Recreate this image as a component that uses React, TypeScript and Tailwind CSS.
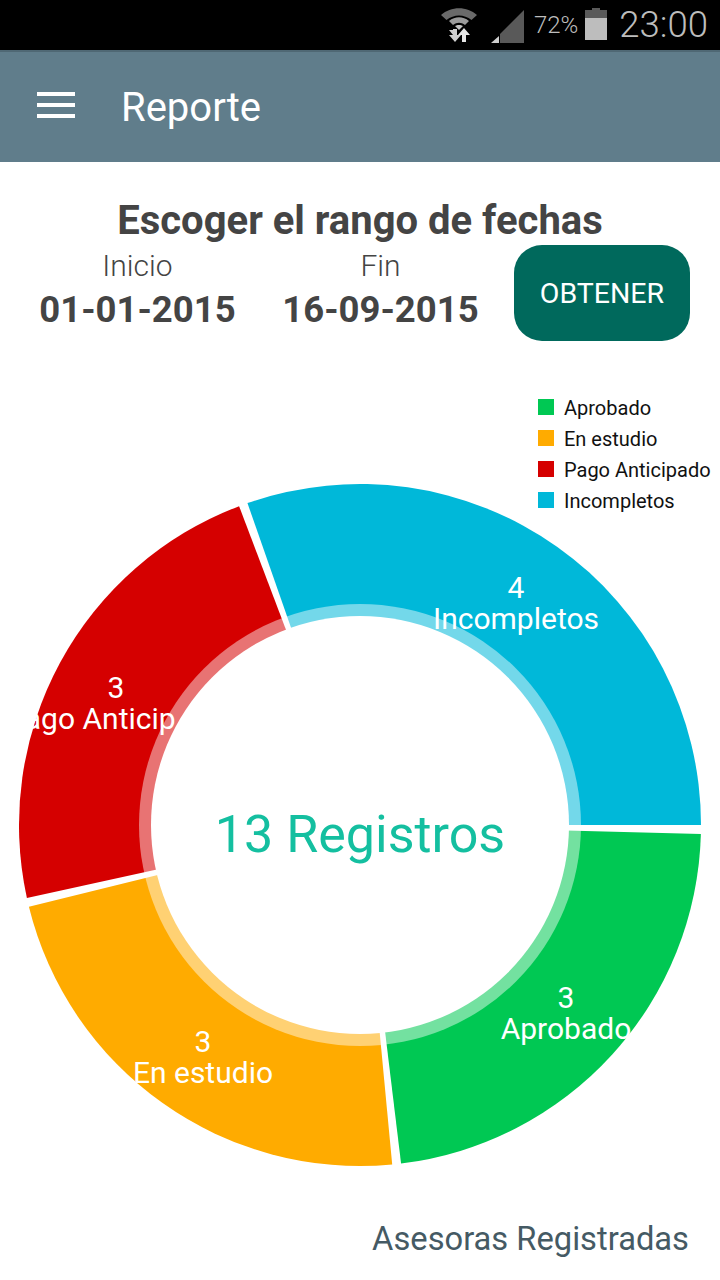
const CX = 360;
const CY = 465;
const R = 341;

const slices = [
  { from: 1.5, to: 83.08, color: "#00C853" },
  { from: 84.58, to: 166.15, color: "#FFAB00" },
  { from: 167.65, to: 249.23, color: "#D50000" },
  { from: 250.73, to: 360, color: "#00B8D9" },
];

function pt(r: number, deg: number) {
  const a = (deg * Math.PI) / 180;
  return `${(CX + r * Math.cos(a)).toFixed(2)} ${(CY + r * Math.sin(a)).toFixed(2)}`;
}

function wedge(from: number, to: number) {
  const large = to - from > 180 ? 1 : 0;
  return `M ${CX} ${CY} L ${pt(R, from)} A ${R} ${R} 0 ${large} 1 ${pt(R, to)} Z`;
}

const labels = [
  { x: 566, n: 648, t: 679, n1: "3", t1: "Aprobado" },
  { x: 203, n: 692, t: 723, n1: "3", t1: "En estudio" },
  { x: 116, n: 338, t: 369, n1: "3", t1: "Pago Anticipado", clip: "url(#pago)" },
  { x: 516, n: 238, t: 269, n1: "4", t1: "Incompletos" },
];

const legend = [
  { c: "bg-[#00C853]", t: "Aprobado" },
  { c: "bg-[#FFAB00]", t: "En estudio" },
  { c: "bg-[#D50000]", t: "Pago Anticipado" },
  { c: "bg-[#00B8D9]", t: "Incompletos" },
];

function Wifi() {
  return (
    <svg width="36" height="36" viewBox="0 0 36 36" className="mr-[14px] mt-[7px]">
      <path d="M0 8 C 10 -1, 26 -1, 36 8 L 30.5 13 C 23 7, 13 7, 5.500 13 Z" fill="#6a6a6a" />
      <path d="M8 14 C 14 9, 22 9, 28 14 L 24 18 C 20 15, 16 15, 12 18 Z" fill="#9a9a9a" />
      <path d="M14 19 C 16 17.5, 20 17.5, 22 19 L 18 23 Z" fill="#c4c4c4" />
      <path d="M10 24 h4 v-1 h4 v1 v5 h4 l-6 7 l-6 -7 h4 Z" transform="translate(-2 -1)" fill="#d0d0d0" />
      <path d="M20 21 l6 7 h-4 v7 h-4 v-7 h-4 Z" transform="translate(3 0)" fill="#e6e6e6" />
    </svg>
  );
}

function Signal() {
  return (
    <svg width="33" height="34" viewBox="0 0 33 34" className="mr-[10px] mt-[10px]">
      <path d="M33 0 V33 H9 V24 Z" fill="#595959" />
      <path d="M0 33 L8 26 V33 Z" fill="#cfcfcf" />
    </svg>
  );
}

function Battery() {
  return (
    <svg width="22" height="32" viewBox="0 0 22 32" className="ml-[7px] mr-[12px] mt-[-2px]">
      <path d="M7 0 h8 v2 h7 v9 H0 V2 h7 Z" fill="#5a5a5a" />
      <rect x="0" y="10" width="22" height="22" fill="#bdbdbd" />
    </svg>
  );
}

export default function App() {
  return (
    <div className="w-[720px] h-[1280px] overflow-hidden bg-white font-['Roboto',sans-serif]">
      <div className="h-[50px] bg-black flex items-start justify-end">
        <Wifi />
        <Signal />
        <span className="text-[24px] leading-[50px] text-[#bdbdbd] font-light">72%</span>
        <div className="h-[50px] flex items-center">
          <Battery />
        </div>
        <span className="text-[36.500px] leading-[50px] text-[#bdbdbd] font-light mr-[12px]">23:00</span>
      </div>

      <div className="h-[112px] bg-[#607D8B] border-t-2 border-[#4f6874] flex items-center">
        <div className="ml-[37px] mb-[4px] w-[38px] flex flex-col gap-[7px]">
          <div className="h-[4px] bg-white" />
          <div className="h-[4px] bg-white" />
          <div className="h-[4px] bg-white" />
        </div>
        <span className="ml-[46px] mt-[2px] text-[40px] leading-none text-white">Reporte</span>
      </div>

      <h1 className="mt-[35px] text-center text-[40px] leading-[48px] font-bold text-[#444444]">
        Escoger el rango de fechas
      </h1>

      <div className="flex items-start mt-[3px]">
        <div className="w-[243px] ml-[16px] text-center">
          <div className="text-[30px] leading-[40px] font-light text-[#444444] mt-[-2px]">Inicio</div>
          <div className="text-[36.500px] leading-[47px] font-bold text-[#444444]">01-01-2015</div>
        </div>
        <div className="w-[243px] text-center">
          <div className="text-[30px] leading-[40px] font-light text-[#444444] mt-[-2px]">Fin</div>
          <div className="text-[36.500px] leading-[47px] font-bold text-[#444444]">16-09-2015</div>
        </div>
        <button className="ml-[12px] mt-[-3px] w-[176px] h-[96px] pt-[3px] rounded-[28px] bg-[#00695C] text-white text-[28.500px]">
          OBTENER
        </button>
      </div>

      <div className="relative mt-[19px] h-[840px]">
        <svg width="720" height="840" viewBox="0 0 720 840" className="block">
          <defs>
            <clipPath id="pago">
              <rect x="0" y="320" width="175" height="80" />
            </clipPath>
          </defs>
          {slices.map((s) => (
            <path key={s.color} d={wedge(s.from, s.to)} fill={s.color} />
          ))}
          <circle cx={CX} cy={CY} r="221" fill="#ffffff" fillOpacity="0.45" />
          <circle cx={CX} cy={CY} r="209" fill="#ffffff" />
          {labels.map((l) => (
            <g key={l.t1} fill="#ffffff" fontSize="30" textAnchor="middle">
              <text x={l.x} y={l.n}>{l.n1}</text>
              <text x={l.x} y={l.t} clipPath={l.clip}>{l.t1}</text>
            </g>
          ))}
          <text x={CX} y="492" fill="#14BFA0" fontSize="52" textAnchor="middle">13 Registros</text>
        </svg>
        <div className="absolute left-[538px] top-[39px] flex flex-col gap-[15px]">
          {legend.map((l) => (
            <div key={l.t} className="h-[16px] flex items-center whitespace-nowrap">
              <div className={`w-[16px] h-[16px] ${l.c}`} />
              <span className="ml-[10px] mt-[1px] text-[20px] leading-none text-[#111111]">{l.t}</span>
            </div>
          ))}
        </div>
      </div>

      <div className="mt-[17px] pr-[31px] text-right text-[32.700px] leading-[44px] text-[#455A64]">
        Asesoras Registradas
      </div>
    </div>
  );
}
